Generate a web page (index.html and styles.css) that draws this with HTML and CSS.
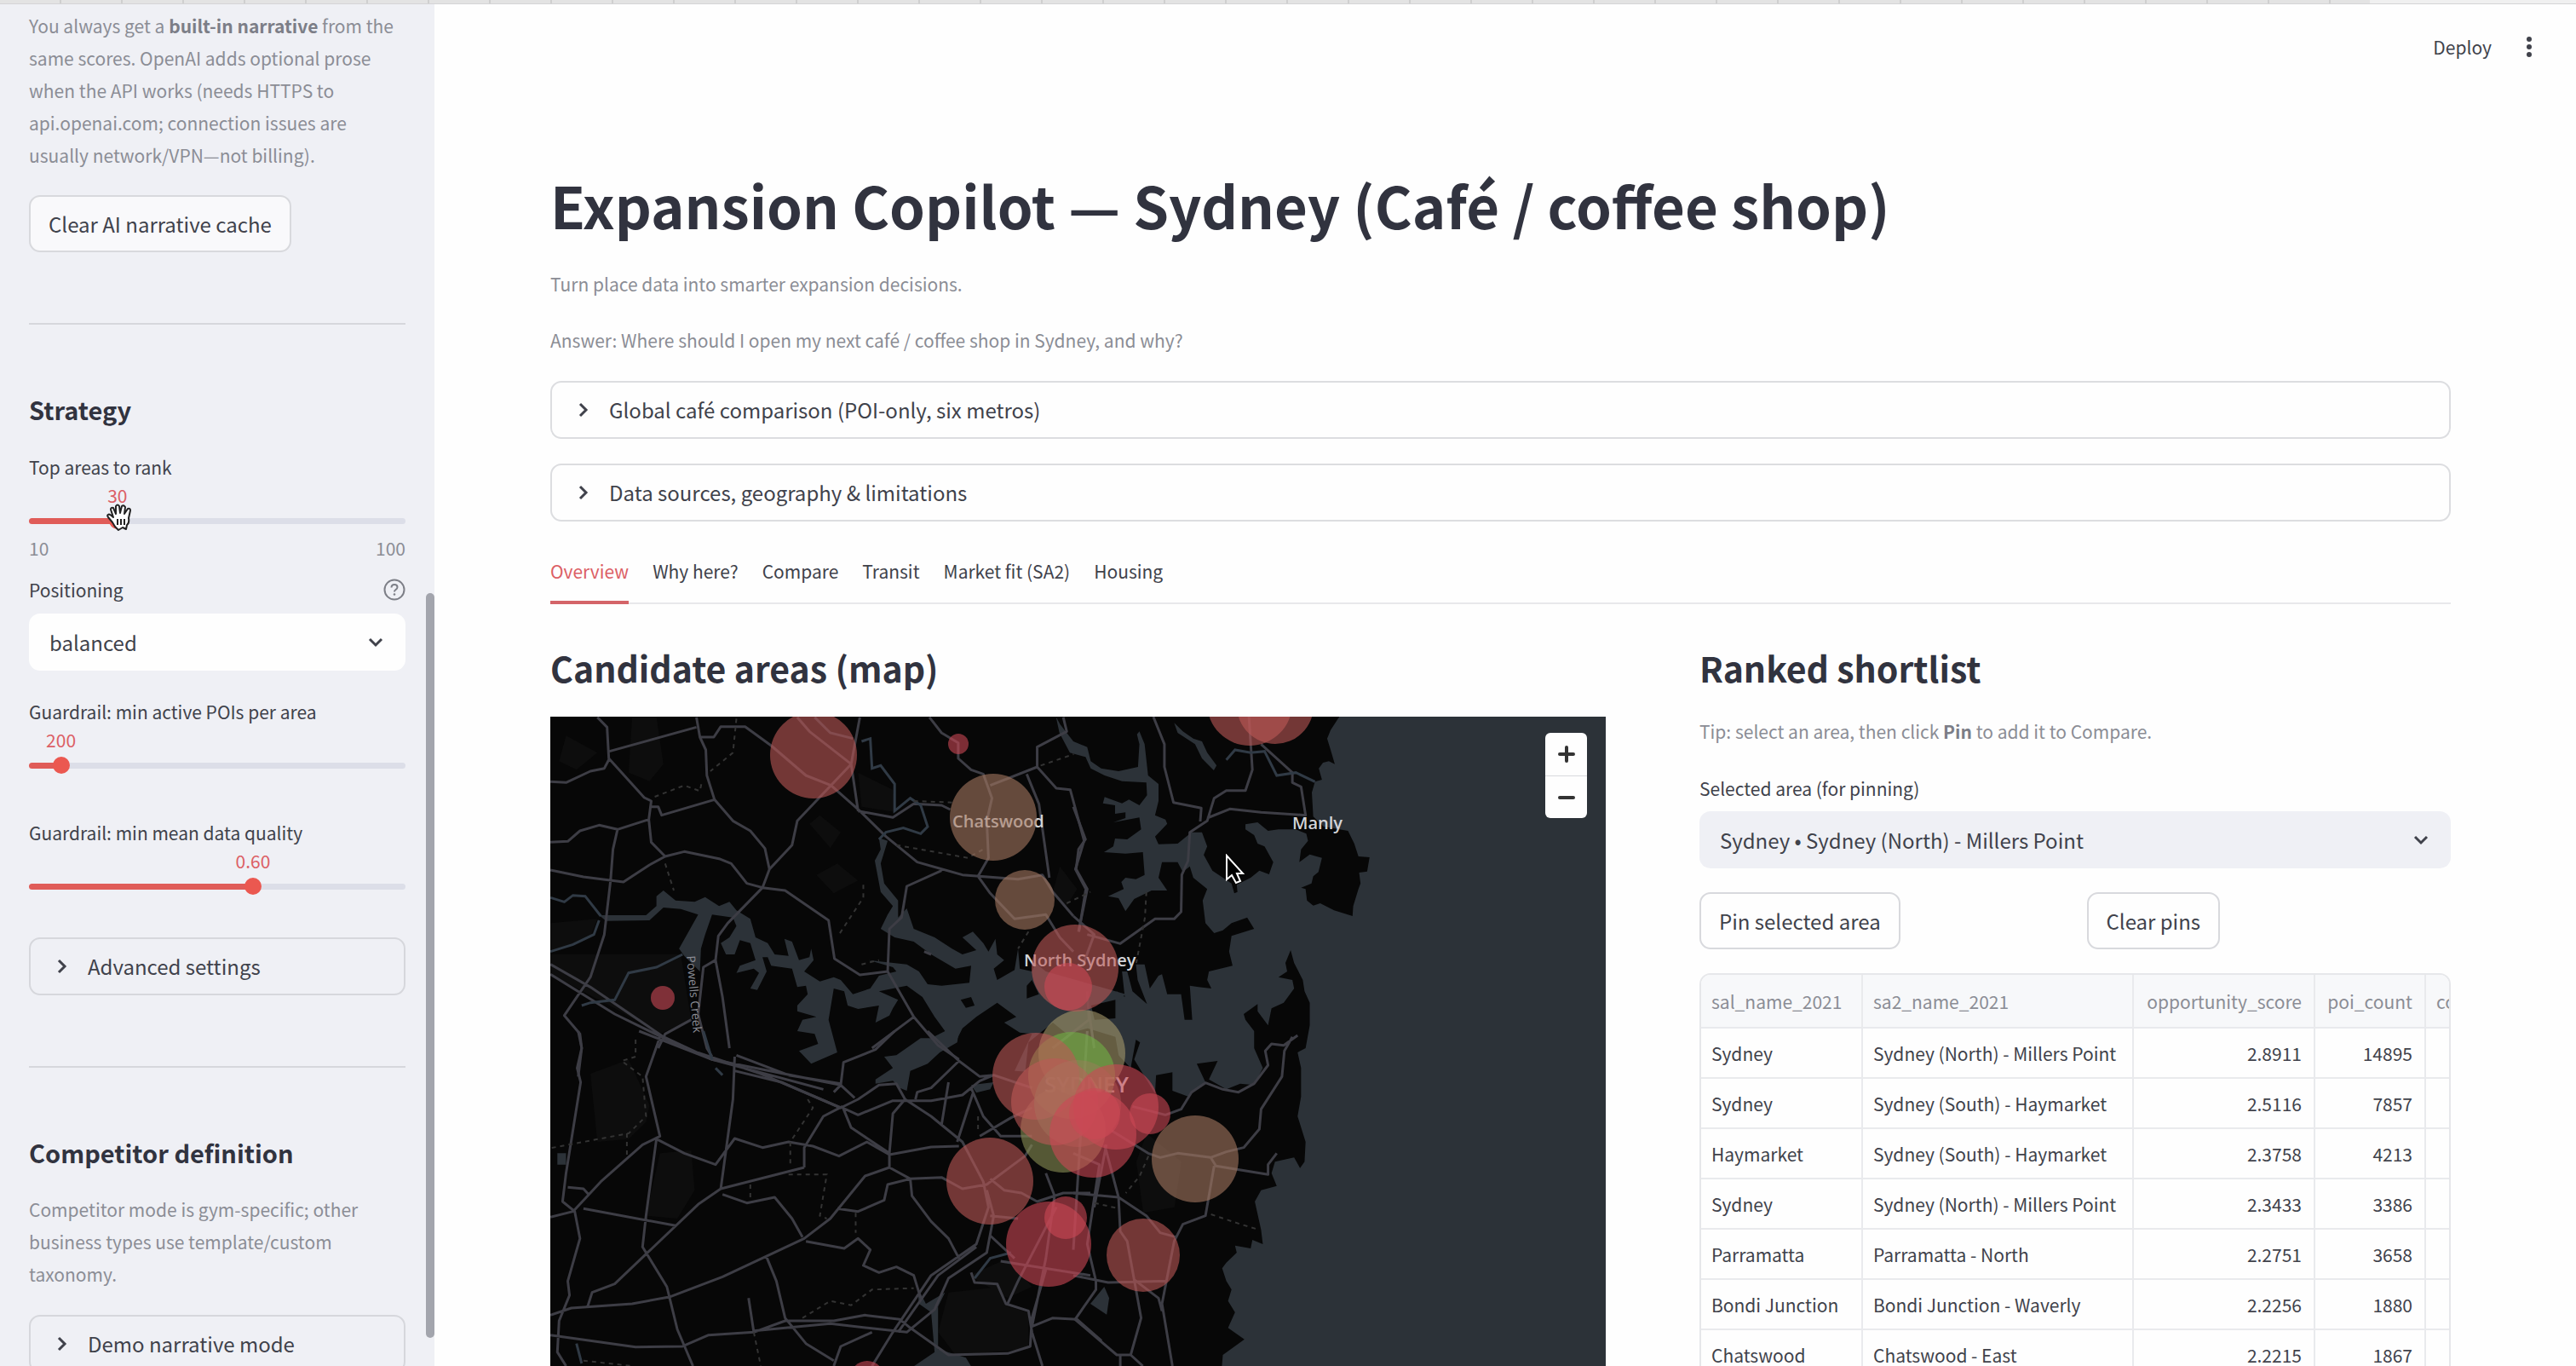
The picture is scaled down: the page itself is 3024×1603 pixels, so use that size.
FILE: index.html
```html
<!DOCTYPE html>
<html lang="en">
<head>
<meta charset="utf-8">
<title>Expansion Copilot</title>
<link rel="stylesheet" href="styles.css">
</head>
<body>
<div class="tabstrip"><div class="tabstrip-used"></div></div>
<div class="app">
  <aside class="sidebar">
    <p class="caption first">You always get a <strong>built-in narrative</strong> from the same scores. OpenAI adds optional prose when the API works (needs HTTPS to api.openai.com; connection issues are usually network/VPN—not billing).</p>
    <button class="btn" type="button">Clear AI narrative cache</button>
    <hr>
    <h3>Strategy</h3>
    <div class="field slider">
      <label for="top">Top areas to rank</label>
      <div class="value-row"><output class="value" for="top" style="--pos:23.5%">30</output></div>
      <input id="top" type="range" min="10" max="100" value="30" style="--pos:22.22%">
      <div class="ticks"><span>10</span><span>100</span></div>
      <svg class="grab" viewBox="0 0 32 32" width="32" height="32" aria-hidden="true"><path d="M10 27 L7 22 L2 16 Q0 13 3 12.500 Q5 13 8 16 L5 7 Q5 4 8 5 L11 12 L11 3 Q13 0 15 3 L16 11 L18 3 Q20 1 22 4 L21 12 L25 6 Q28 5 28 8 L26 17 Q27 23 24 25 L23 30 L19 28 L14 31 Z" fill="#fff" stroke="#222" stroke-width="2" stroke-linejoin="round"/><path d="M13 18v7M17 18v7M21 18v7" stroke="#222" stroke-width="2"/></svg>
    </div>
    <div class="field tight">
      <div class="label-row"><label for="positioning">Positioning</label>
        <svg class="help" viewBox="0 0 26 26" width="26" height="26" aria-hidden="true"><circle cx="13" cy="13" r="11.500" fill="none" stroke="currentColor" stroke-width="2"/><path d="M9.500 10.500Q9.500 7 13 7Q16.500 7 16.500 10Q16.500 12 14.500 13Q13 14 13 15.500" fill="none" stroke="currentColor" stroke-width="2"/><circle cx="13" cy="18.500" r="1.300" fill="currentColor"/></svg></div>
      <div class="select light"><select id="positioning"><option>balanced</option></select>
        <svg class="chev" viewBox="0 0 18 12" width="18" height="12" aria-hidden="true"><path d="M2 2l7 7 7-7"/></svg></div>
    </div>
    <div class="field slider plain">
      <label for="pois">Guardrail: min active POIs per area</label>
      <div class="value-row"><output class="value" for="pois" style="--pos:8.5%">200</output></div>
      <input id="pois" type="range" min="0" max="3000" value="200" style="--pos:8.5%">
    </div>
    <div class="field slider plain">
      <label for="quality">Guardrail: min mean data quality</label>
      <div class="value-row"><output class="value" for="quality" style="--pos:59.5%">0.60</output></div>
      <input id="quality" type="range" min="0" max="1" step="0.01" value="0.6" style="--pos:59.5%">
    </div>
    <details class="expander"><summary><svg class="arrow" viewBox="0 0 12 18" width="12" height="18" aria-hidden="true"><path d="M2 2l7 7-7 7"/></svg>Advanced settings</summary></details>
    <hr>
    <h3>Competitor definition</h3>
    <p class="caption note">Competitor mode is gym-specific; other business types use template/custom taxonomy.</p>
    <details class="expander"><summary><svg class="arrow" viewBox="0 0 12 18" width="12" height="18" aria-hidden="true"><path d="M2 2l7 7-7 7"/></svg>Demo narrative mode</summary></details>
    <div class="thumb"></div>
  </aside>

  <main class="main">
    <header class="toolbar"><button type="button">Deploy</button><button type="button" aria-label="Menu"><svg viewBox="0 0 6 24" width="6" height="24" aria-hidden="true"><circle cx="3" cy="3" r="3"/><circle cx="3" cy="12" r="3"/><circle cx="3" cy="21" r="3"/></svg></button></header>
    <h1>Expansion Copilot — Sydney (Café / coffee shop)</h1>
    <p class="caption lead">Turn place data into smarter expansion decisions.</p>
    <p class="caption lead">Answer: Where should I open my next café / coffee shop in Sydney, and why?</p>
    <details class="expander wide"><summary><svg class="arrow" viewBox="0 0 12 18" width="12" height="18" aria-hidden="true"><path d="M2 2l7 7-7 7"/></svg>Global café comparison (POI-only, six metros)</summary></details>
    <details class="expander wide"><summary><svg class="arrow" viewBox="0 0 12 18" width="12" height="18" aria-hidden="true"><path d="M2 2l7 7-7 7"/></svg>Data sources, geography &amp; limitations</summary></details>
    <nav class="tabs"><button class="active" type="button">Overview</button><button type="button">Why here?</button><button type="button">Compare</button><button type="button">Transit</button><button type="button">Market fit (SA2)</button><button type="button">Housing</button></nav>
    <div class="columns">
      <section>
        <h2>Candidate areas (map)</h2>
        <div class="map">
          <svg class="canvas" viewBox="0 0 1239 833" preserveAspectRatio="xMinYMin slice" role="img" aria-label="Map of Sydney">
            <g transform="translate(-6 -11) scale(.408163 .333333)">
              <!-- parkland -->
              <g fill="#0d0d0d">
                <path d="M15 760L150 745 130 810 80 830 15 860ZM15 870L390 870 420 1100 330 1150 200 1060 15 940ZM900 230L1000 290 1010 370 910 350ZM760 410L790 380 850 440 820 495ZM780 590L840 550 900 610 830 655Z"/>
                <path d="M130 1290L240 1240 300 1400 290 1460 240 1520 150 1530ZM330 1570L420 1560 430 1700 380 1800 290 1790ZM1160 2060L1310 2040 1330 2110 1390 2130 1390 2260 1180 2280 1130 2200ZM1220 2000L1330 1940 1400 2040 1330 2080ZM1700 1600L1730 1500 1830 1600 1810 1760 1720 1780Z"/>
                <path d="M250 33H320L340 200 300 260 240 230ZM60 100L150 160 90 220 40 190ZM1480 560L1530 640 1500 700 1460 650Z"/>
              </g>
              <g fill="#2c3238">
                <!-- ocean, Middle Harbour and the harbour mouth -->
                <path transform="translate(1519 0)" d="M1540 33L765 33 740 80 730 110 740 150 752 200 735 190 718 195 706 215 715 255 695 262 686 300 690 385 720 420 790 435 808 480 820 525 852 528 845 578 822 582 826 620 820 640 805 700 803 735 750 715 710 690 690 698 672 680 668 640 655 635 685 620 690 595 705 580 715 530 680 518 650 545 655 500 675 470 670 445 640 430 590 430 560 435 530 405 495 412 495 430 520 450 530 480 550 490 575 545 563 588 535 575 510 600 470 625 472 650 463 655 455 620 400 575 375 520 385 490 370 440 340 440 300 480 245 482 235 455 270 410 265 395 235 380 245 330 245 270 215 240 205 130 190 85 183 95 190 130 186 210 130 225 80 215 50 190 40 140 0 120 -38 60 -50 33 -40 90 -10 160 35 175 50 215 90 240 140 260 210 265 212 310 190 345 160 325 140 338 90 316 85 338 120 345 120 375 150 370 150 390 115 405 190 388 195 430 155 465 120 462 115 490 88 510 150 515 200 510 205 590 180 605 150 600 138 615 145 640 100 665 130 672 150 718 175 675 225 645 270 645 245 600 255 545 300 545 315 580 335 560 345 600 385 640 372 680 380 760 405 795 430 785 455 760 500 740 520 780 455 805 448 860 458 910 390 930 385 960 397 990 360 985 335 980 342 1100 320 1100 310 1010 270 1010 255 940 245 945 220 990 205 905 180 905 185 960 212 1045 170 1000 155 930 140 930 148 1020 125 1000 90 1050 100 1100 110 1200 165 1270 180 1170 192 1180 175 1240 190 1270 235 1360 238 1295 285 1285 285 1350 330 1370 380 1320 355 1255 415 1245 390 1310 440 1345 480 1325 520 1330 545 1270 520 1200 520 1140 495 1100 490 1080 530 1045 530 1070 560 1120 570 1060 605 1040 635 990 630 960 590 950 615 930 610 900 625 855 635 900 660 960 665 1000 680 1040 680 1120 668 1200 645 1215 655 1270 655 1370 645 1440 668 1530 665 1600 652 1622 635 1585 580 1600 570 1640 585 1685 540 1700 522 1740 540 1840 545 1890 515 1875 510 1905 465 1895 470 1920 440 1955 428 1975 440 2020 455 2050 445 2090 465 2130 445 2185 492 2225 430 2280 422 2400 1540 2400Z"/>
                <path transform="translate(1519 0)" d="M290 55L315 85 345 110 370 120 385 160 412 205 404 222 370 180 350 130 300 90Z"/>
                <!-- Parramatta River and inner harbour -->
                <path d="M155 732L290 732 320 700 320 665 340 645 375 680 430 685 460 668 500 700 530 685 550 715 590 745 605 810 640 830 660 870 700 875 688 815 710 825 730 890 760 880 765 850 772 890 745 930 790 965 830 950 850 960 885 1010 935 990 960 945 1010 930 1000 915 930 890 1040 905 1075 930 1100 975 1140 980 1220 970 1225 910 1180 920 1110 870 1060 825 1005 810 965 780 985 730 1000 700 965 650 948 540 965 500 960 460 985 470 965 550 975 620 1015 680 1015 740 1040 708 1060 780 1120 810 1170 850 1200 870 1240 855 1200 810 1230 790 1260 830 1275 860 1295 815 1300 870 1320 890 1290 920 1300 960 1350 925 1360 850 1365 920 1400 930 1410 900 1440 930 1670 1010 1630 1050 1619 1300 1350 1280 1400 1150 1365 1145 1320 1110 1355 1090 1300 1040 1240 1090 1200 1130 1180 1180 1130 1190 1150 1140 1120 1090 1085 1020 1040 980 960 1000 1015 1030 1000 1060 990 1085 950 1110 960 1050 900 1062 870 1050 860 1000 830 990 815 1100 840 1215 765 1255 730 1210 785 1185 775 1150 725 1140 740 1100 780 1090 725 1070 725 1050 755 1010 750 980 725 985 710 920 650 910 640 880 625 880 637 930 610 995 590 990 615 935 600 920 550 935 560 910 605 890 590 830 560 820 545 870 520 870 505 830 530 810 550 770 540 740 480 730 460 800 448 850 445 930 400 875 385 850 440 730 390 710 340 705 300 750 175 752Z"/>
                <path d="M975 1230L1010 1225 1080 1165 1110 1165 1150 1140 1190 1140 1185 1180 1135 1215 1100 1255 1050 1280 1040 1350 1020 1340 1000 1315 950 1325 950 1310 1000 1270ZM1225 1330L1290 1320 1280 1345 1240 1357ZM35 1570H60V1610H35ZM1070 2040L1095 2100 1150 2060 1130 2110 1130 2260 1210 2290 1225 2320H1060L1120 2270 1110 2130 1075 2100ZM1568 2100L1608 2040 1622 2080 1615 2138Z"/>
                <path fill="#070707" d="M1195 1030L1225 1020 1235 1050 1210 1058ZM1430 1140L1460 1110 1500 1150 1560 1130 1640 1160 1660 1300 1380 1290 1390 1180ZM1570 1050L1640 1030 1640 1095 1580 1100ZM1385 980L1400 960 1420 1010 1385 1025Z"/>
              </g>
              <g class="roads">
                <path d="M150 35L178 70 183 180 285 318 305 330 298 395 305 475 345 525M185 155L435 70M435 35L445 105 462 150 465 240 487 325 540 400 590 435 632 497 645 570M445 105H485L505 68 575 68 650 135 750 240 822 275 905 365 980 455 1070 545 1200 590 1360 605 1430 590M15 262L60 265 130 225 170 215 185 180M305 350L325 350 335 380 487 325M15 475L65 472 100 435 155 415 208 430 298 395M208 430L195 500 188 610 170 800 130 950 55 1085 100 1150 105 1200 95 1300M15 573L110 597 225 615 300 555 345 525 400 508 500 533 535 550 580 620 625 635 645 570 710 485 725 400 880 200 905 35M625 635L690 645 815 750 832 885 905 942 985 930 1060 1090 1130 1190 1190 1240M625 635L525 760 498 805 490 890 510 1020 530 1200M490 890L455 915 440 1080 465 1200 480 1230M725 35L760 85 880 200 900 365M900 365L1000 388 1060 340 1140 345 1165 360M985 930L990 780 1025 740 1040 630 1140 575M1105 35L1140 90 1188 125 1188 180 1225 220 1260 235 1285 320 1270 400 1275 530 1245 595 1280 655M1245 595L1360 605 1430 590 1460 650 1519 735M1280 655L1350 745 1440 730 1480 810 1519 860M1280 275L1415 210 1415 140 1500 85 1490 35M1415 210L1470 285 1510 290 1550 470 1525 570 1555 640 1535 790M1385 235L1420 340 1450 600M15 905L130 985 340 1160 480 1240 800 1345M15 940L200 1080 400 1200 620 1290 850 1410M325 1200L345 1150 420 1100M940 1200L1060 1090M1090 860L1110 870"/>
                <path transform="translate(0 1140)" d="M95 0L105 60 92 130 102 180 60 500 50 600 85 635 100 730 65 880 70 930 40 1020 35 1130 60 1179M330 20L290 160 330 370 280 400 160 530 80 635 15 655M320 380L400 430 490 470 545 378 625 410 700 390 770 405 845 440 925 390 990 435 1110 408 1190 405M320 380L290 650 280 760 350 900 380 1050 425 1179M110 625L375 685M65 550L110 555 125 575M545 90L540 240 505 555M270 0L480 100 850 190 890 235M550 85L700 155 850 185M545 140L680 180 850 270 900 240 960 190 1010 185 1035 240 1110 300 1200 390 1260 530 1275 620 1240 750 1110 860 1000 1060 940 1179M855 270L900 295 1000 245 1110 245 1200 225 1250 175 1290 155 1400 200M855 265L880 340 990 430 990 480 920 510 820 660 745 730 510 865 360 935 250 960 75 975 15 1000M745 480L505 555 440 610 290 785 200 890 135 920 122 970M745 480L745 410 800 300 855 265M1005 0L950 65 858 110 850 190 830 215M1035 240L1000 290 990 430M990 480L1050 520 1055 580 1110 670 1160 730 1190 800M840 625L900 635 975 595 985 540 1050 520 1140 515 1200 555 1270 540 1380 440 1400 400M750 740L860 765 900 730 935 770 915 825 960 850 1010 830 1060 860 1080 940M510 575L580 605 660 585 710 660 740 725M635 790L665 880 690 1010 750 1100 830 1160M1100 0L1190 105 1250 160 1290 155M1190 105L1110 200 1070 215 1065 240M1160 180L1140 330M1225 200L1260 300 1310 370 1400 370M1230 220L1185 390M1250 370L1340 305 1400 270M15 1070L260 1112 395 1110 470 1070 600 1060 690 1020 830 1020 920 1000 1020 1015 1045 1040 1160 1140 1330 1135 1395 1110 1400 1010 1440 840M600 1055L820 1030 1040 1060 1120 980 1160 870 1270 780 1290 650 1270 560M585 940L600 1060M1015 1060L1130 860 1240 760M940 1060L850 1110 830 1179M1280 720L1350 800M1310 810L1568 860M1225 850L1235 885 1300 890 1325 960 1390 985 1400 1060 1430 1179M1280 520L1320 560 1370 570 1415 600 1490 570 1568 570M1440 500L1465 580 1440 800 1400 1040M1330 960L1360 880 1470 620M1400 1040L1460 1010 1530 1015 1600 1090M1280 650L1360 660"/>
                <path transform="translate(1519 0)" d="M230 33L262 130 262 210 288 335 368 355 365 402M505 33L515 220 495 293 440 293 405 320 385 400 335 440 330 540 312 590 310 720 290 745 235 745 135 832 40 800M540 130L630 230 630 265 655 280 668 380 540 370 450 358 385 390M0 350L35 465 15 500 8 570 40 640 15 790M0 735L60 800 30 900M40 1000L45 1100 -60 1200M45 1070L60 1200"/>
                <path transform="translate(1519 1140)" d="M0 770L40 0M645 15L605 50 570 45 552 70 560 120 520 185 475 215 430 205 380 182 340 215 310 275 265 295 170 265M630 20L607 70 600 160 540 275 535 345 490 410 440 425 395 445 300 430 250 445 215 430 110 350M395 445L410 475 560 505 560 470 585 430M405 475L380 650 315 680 290 740 255 960 285 1179M0 570L130 585 210 650 250 710 295 725M130 585L135 705 155 740 175 875 195 1010 165 1140 200 1179M175 875L245 940 255 985M0 860L100 885 270 880M0 430L75 470 40 750 65 880 65 910 5 1015 125 1140 165 1140M90 400L130 585M95 400L60 620M135 1140V1179"/>
              </g>
              <g class="rivers">
                <path d="M15 670L55 685 80 662 115 665 160 735M155 750L140 800 80 835 15 860M395 870L320 915 240 935 200 1030 130 1040 105 1050M910 120L935 110 940 215 965 205 1005 270 1005 365 1050 320 1080 345 1100 420 1080 445 1030 425 980 440 960 465M775 35L820 90 885 110"/>
                <path transform="translate(1519 0)" d="M440 185L465 150 510 160 550 155 585 240 640 230 695 262"/>
                <path transform="translate(0 1140)" d="M1235 870L1280 800 1340 780M490 130L510 155M90 1100L105 1170M455 0L480 100"/>
              </g>
              <path class="trails" d="M550 40L540 160 475 225M315 315L400 275 445 295 450 265M345 550L370 645M1010 485L1215 530 1260 500M1060 330L1170 335M1425 205L1520 165M915 625L915 670 845 800M910 905L960 890M1390 790L1360 850M1500 690L1568 650M1729 650L1725 740 1700 900M260 1170V1230L220 1245 280 1300 290 1440 240 1500 15 1552M235 1500V1580M755 1380L770 1410 705 1530 705 1620M700 1645H810L790 1790 810 1800M590 1680V1730M893 1780V1850M740 2150L820 2090 880 2105 940 2050 1060 2045M600 2200L620 2319M110 2300L250 2319M1735 1580L1710 1650 1670 1710M1580 1745L1650 1765M1915 1785L2000 1820 2050 1838M1245 1440V1500"/>
            </g>
            <g class="labels">
              <text x="472" y="130">Chatswood</text>
              <text x="556" y="293">North Sydney</text>
              <text x="871" y="132">Manly</text>
              <text class="city" x="580" y="441">SYDNEY</text>
              <text class="creek" transform="translate(160 281) rotate(85)">Powells Creek</text>
            </g>
            <g class="areas">
              <circle cx="624" cy="395" r="51" fill="#a5986a"/><circle cx="602" cy="485" r="50" fill="#8a9055"/><circle cx="612" cy="421" r="51" fill="#70b045"/>
              <circle class="low" cx="309" cy="45" r="51"/><circle class="low" cx="516" cy="545" r="51"/><circle class="low" cx="570" cy="422" r="51"/><circle class="low" cx="592" cy="452" r="51"/>
              <circle class="low" cx="616" cy="295" r="51"/><circle class="low" cx="821" cy="-16" r="50"/><circle class="low" cx="851" cy="-13" r="45"/><circle class="low" cx="696" cy="632" r="43"/>
              <circle class="mid" cx="619" cy="454" r="51" fill-opacity=".4"/>
              <circle class="hot" cx="664" cy="458" r="50"/><circle class="hot" cx="637" cy="490" r="51"/><circle class="hot" cx="585" cy="619" r="50"/><circle class="hot" cx="608" cy="317" r="28"/><circle class="hot" cx="605" cy="588" r="25"/>
              <circle class="hot" cx="704" cy="466" r="24"/><circle class="hot" cx="479" cy="32" r="12"/><circle class="hot" cx="132" cy="330" r="14"/><circle class="hot" cx="372" cy="776" r="20"/><circle class="hot" cx="639" cy="466" r="30"/>
              <circle class="mid" cx="520" cy="118" r="51"/><circle class="mid" cx="557" cy="215" r="35"/><circle class="mid" cx="757" cy="519" r="51"/>
            </g>
          </svg>
          <div class="zoom"><button type="button" aria-label="Zoom in"><svg viewBox="0 0 20 20" width="20" height="20"><path d="M2 10H18M10 2V18"/></svg></button><button type="button" aria-label="Zoom out"><svg viewBox="0 0 20 20" width="20" height="20"><path d="M2 10H18"/></svg></button></div>
          <svg class="pointer" viewBox="0 0 24 36" width="24" height="36" aria-hidden="true"><path d="M2 2V30L8 25 13 34 18 32 14 23H21Z" fill="#000" stroke="#fff" stroke-width="2"/></svg>
        </div>
      </section>
      <section>
        <h2>Ranked shortlist</h2>
        <p class="caption tip">Tip: select an area, then click <strong>Pin</strong> to add it to Compare.</p>
        <label class="area-label" for="area">Selected area (for pinning)</label>
        <div class="select area"><select id="area"><option>Sydney • Sydney (North) - Millers Point</option></select>
          <svg class="chev" viewBox="0 0 18 12" width="18" height="12" aria-hidden="true"><path d="M2 2l7 7 7-7"/></svg></div>
        <div class="actions"><div><button class="btn" type="button">Pin selected area</button></div><div><button class="btn" type="button">Clear pins</button></div></div>
        <div class="table-wrap">
          <table>
            <colgroup><col class="c1"><col class="c2"><col class="c3"><col class="c4"><col class="c5"></colgroup>
            <thead><tr><th>sal_name_2021</th><th>sa2_name_2021</th><th class="num">opportunity_score</th><th class="num">poi_count</th><th>competition</th></tr></thead>
            <tbody>
              <tr><td>Sydney</td><td>Sydney (North) - Millers Point</td><td class="num">2.8911</td><td class="num">14895</td><td></td></tr>
              <tr><td>Sydney</td><td>Sydney (South) - Haymarket</td><td class="num">2.5116</td><td class="num">7857</td><td></td></tr>
              <tr><td>Haymarket</td><td>Sydney (South) - Haymarket</td><td class="num">2.3758</td><td class="num">4213</td><td></td></tr>
              <tr><td>Sydney</td><td>Sydney (North) - Millers Point</td><td class="num">2.3433</td><td class="num">3386</td><td></td></tr>
              <tr><td>Parramatta</td><td>Parramatta - North</td><td class="num">2.2751</td><td class="num">3658</td><td></td></tr>
              <tr><td>Bondi Junction</td><td>Bondi Junction - Waverly</td><td class="num">2.2256</td><td class="num">1880</td><td></td></tr>
              <tr><td>Chatswood</td><td>Chatswood - East</td><td class="num">2.2215</td><td class="num">1867</td><td></td></tr>
            </tbody>
          </table>
        </div>
      </section>
    </div>
  </main>
</div>
</body>
</html>
```
FILE: styles.css
```css
* { box-sizing: border-box; }
body { margin: 0; height: 100vh; display: flex; flex-direction: column; overflow: hidden; background: #fefefe; color: #40424b; font: 24px/38px "Noto Sans CJK SC", "Open Sans", sans-serif; }
p, h1, h2, h3 { margin: 0; }
button, select, input { font: inherit; color: inherit; margin: 0; }
h1, h2, h3, strong { font-weight: 700; }
h1, h2, h3 { color: #31333f; }

.tabstrip { flex: none; height: 5px; background: #f0f0f0; border-bottom: 1px solid #d4d4d6; }
.tabstrip-used { width: 92%; height: 4px; background: repeating-linear-gradient(90deg, #e3e3e3 0 70px, #cfcfcf 70px 72px); }

.app { flex: 1; min-height: 0; display: flex; }
.sidebar { position: relative; flex: none; width: 510px; padding: 6px 34px 0; background: #eff0f5; overflow: hidden; }
.thumb { position: absolute; top: 691px; right: 0; width: 10px; height: 874px; border-radius: 5px; background: #a3a5ad; }
.caption { font-size: 21px; line-height: 38px; color: #8b8d95; }
.caption strong { color: #7c7e87; }
.note { margin-top: 28px; }
.btn { height: 67px; padding: 0 21px; border: 2px solid #d8d9dd; border-radius: 13px; background: #fefefe; white-space: nowrap; }
.sidebar .btn { margin-top: 28px; background: #f9f9fb; }
hr { height: 2px; margin: 83px 0 79px; border: 0; background: #d6d7dc; }
h3 { font-size: 29px; line-height: 40px; }
label { display: block; font-size: 21px; line-height: 38px; }

.field { position: relative; margin-top: 29px; }
.tight { margin-top: 14px; }
.plain { padding-bottom: 15px; }
.value-row { position: relative; height: 28px; font-size: 21px; line-height: 28px; color: #dc5f65; }
.value { position: absolute; left: var(--pos); transform: translateX(-50%); }
input[type="range"] { display: block; appearance: none; width: 100%; height: 32px; background: none; }
input[type="range"]::-webkit-slider-runnable-track { height: 7px; border-radius: 4px; background: linear-gradient(90deg, #e05c58 var(--pos), #dcdee8 var(--pos)); }
input[type="range"]::-webkit-slider-thumb { appearance: none; width: 20px; height: 20px; margin-top: -7px; border-radius: 50%; background: #eb5850; }
.ticks { display: flex; justify-content: space-between; font-size: 21px; line-height: 32px; color: #8b8d95; }
.grab { position: absolute; top: 62px; left: 91px; }
.label-row { display: flex; justify-content: space-between; align-items: center; margin-bottom: 9px; }
.help { color: #7d7f87; }
.select { position: relative; display: grid; align-items: center; }
.select select { appearance: none; width: 100%; height: 67px; padding: 0 24px; border: 0; border-radius: 13px; background: #eff0f5; }
.select.light select { background: #fefefe; }
.select.area select { font-family: "Noto Sans CJK KR", sans-serif; }
.chev { position: absolute; right: 26px; }
.chev path, .arrow path { fill: none; stroke: #40424b; stroke-width: 3; }

.expander { margin-top: 29px; border: 2px solid #d6d7dc; border-radius: 13px; }
.expander summary { display: flex; align-items: center; gap: 24px; height: 64px; padding-left: 31px; list-style: none; }

.main { flex: 1; min-width: 0; padding: 0 147px 0 136px; overflow: hidden; }
.toolbar { display: flex; justify-content: flex-end; align-items: center; gap: 41px; height: 100px; margin-right: -95px; font-size: 21px; }
.toolbar button { display: flex; padding: 0; border: 0; background: none; }
.toolbar svg { fill: #40424b; }
h1 { padding-top: 89px; font-size: 67px; line-height: 92px; white-space: nowrap; }
.lead { margin-top: 28px; }
.wide { border-color: #dcdde0; }

.tabs { display: flex; gap: 28px; height: 72px; margin-top: 25px; border-bottom: 2px solid #e8e8eb; font-size: 21px; }
.tabs button { height: 72px; padding: 0 0 3px; border: 0; border-bottom: 4px solid transparent; background: none; }
.tabs .active { color: #dc5f65; border-color: #d46468; }
.columns { display: grid; grid-template-columns: 1239fr 882fr; gap: 110px; padding-top: 44px; }
.columns section { min-width: 0; }
h2 { font-size: 41px; line-height: 60px; }

.map { position: relative; height: 833px; margin-top: 28px; background: #070707; overflow: hidden; }
.canvas { display: block; width: 100%; height: 100%; }
.canvas > g:first-child path { vector-effect: non-scaling-stroke; }
.roads { fill: none; stroke: #3d3d45; stroke-width: 3; stroke-linejoin: round; }
.rivers { fill: none; stroke: #303a45; stroke-width: 3; }
.trails { fill: none; stroke: #333; stroke-width: 2; stroke-dasharray: 5 5; }
.labels { font: 600 20px "Open Sans", sans-serif; fill: #d3d4d8; }
.labels .city { font-size: 26px; }
.labels .creek { font-size: 14px; font-weight: 400; fill: #8b8d95; }
.areas { fill-opacity: .6; }
.low { fill: #bc5857; }
.hot { fill: #cc4855; }
.mid { fill: #a57860; }
.zoom { position: absolute; top: 19px; right: 22px; display: flex; flex-direction: column; width: 49px; border-radius: 6px; background: #fefefe; overflow: hidden; }
.zoom button { display: grid; place-items: center; height: 50px; padding: 0; border: 0; background: none; }
.zoom button + button { border-top: 1px solid #d8d9dd; }
.zoom path { stroke: #333; stroke-width: 4; stroke-linecap: round; }
.pointer { position: absolute; left: 792px; top: 161px; }

.tip { margin-top: 26px; }
.area-label { margin: 29px 0 8px; }
.actions { display: grid; grid-template-columns: 1fr 1fr; gap: 27px; margin: 28px 0; }
.actions div { display: flex; }
.table-wrap { border: 2px solid #e6e7ea; border-bottom: 0; border-radius: 13px 13px 0 0; overflow: hidden; }
table { table-layout: fixed; width: 1060px; border-collapse: separate; border-spacing: 0; font-size: 21px; line-height: 30px; }
th, td { height: 59px; padding: 0 14px 0 12px; border-right: 2px solid #e9eaed; border-bottom: 2px solid #e9eaed; text-align: left; white-space: nowrap; }
th { height: 63px; font-weight: 400; color: #8b8d95; background: #f7f8fa; }
th.num, td.num { text-align: right; }
.c1 { width: 190px; }
.c2 { width: 318px; }
.c3 { width: 213px; }
.c4 { width: 130px; }
```
